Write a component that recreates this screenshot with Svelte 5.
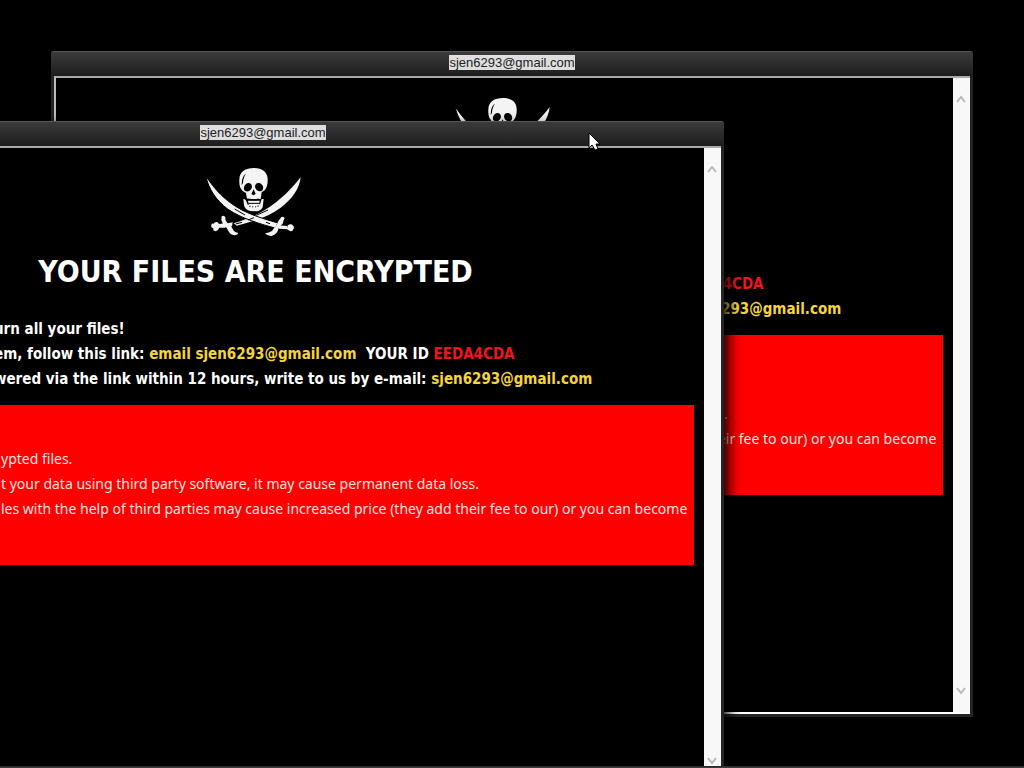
<script>
  const mail = 'sjen6293@gmail.com';
  const frames = ['back', 'front'];
</script>

{#snippet emblem()}
  <svg class="emblem" viewBox="34 36 300 210" role="img" aria-label="Skull and crossed swords">
    <g fill="#f4f4f4">
      <path d="M318 66C315 100 293 132 258 158C222 184 176 200 126 212L117 205C165 190 208 171 241 144C272 120 295 96 318 66Z" />
      <path d="M112 214L92 217L91 206L114 202ZM73 207L91 205L92 218L74 218L69 226Q62 231 56 226L56 220Q48 218 50 210Q50 205 57 206Q61 198 69 202Z" />
      <path d="M81 184Q89 179 92 187Q90 195 98 204Q108 210 114 222Q119 232 131 234Q129 242 116 240Q105 238 100 226Q94 215 84 205Q78 194 81 184Z" />
      <path stroke="#000" stroke-width="3" d="M34 64C41 101 65 137 100 163C142 191 194 206 241 219L250 204C198 189 149 174 111 146C77 122 56 96 34 64Z" />
      <path d="M252 211L277 213L278 223L252 221ZM279 211L286 208Q293 206 295 212Q301 216 296 222Q294 231 286 228L277 223Z" />
      <path d="M260 186Q268 183 270 190Q265 198 265 205Q258 212 252 219Q249 237 231 243Q218 244 211 235Q223 234 232 228Q238 218 246 209Q249 199 260 186Z" />
      <path d="M134 73C135 49 152 39 178 39C205 39 221 53 219 78C219 88 216 98 210 106L201 112L198 132L157 132L154 114Q141 108 137 98Q133 88 134 73Z" />
      <path d="M146 132Q151 130 155 139L159 149L196 148L201 132L207 132L204 156Q200 168 184 169L167 168Q151 165 148 151Z" />
      <path d="M160 137H195L192 155L181 158L164 155Z" />
    </g>
    <path d="M154 56Q145 61 142 76L141 91Q146 86 146 74Q148 63 154 56ZM160 84C169 83 174 91 171 99C168 108 156 113 149 106C145 98 150 87 160 84ZM194 84C184 82 179 91 182 99C186 109 198 112 204 105C208 97 204 87 194 84ZM177 103L170 117L176 121L183 117Z" />
    <path d="M160 129V134M166 131V137M172 132V138M178 132V138M184 132V138M190 130V136M161 145H195M166 152V156M174 154V157M183 154V157M190 151V155" fill="none" stroke="#000" stroke-width="3" />
    <path d="M120 162L151 180M220 165L185 181M178 188L160 195M226 206L214 202M123 207L142 202" fill="none" stroke="#000" stroke-width="3" />
  </svg>
{/snippet}

<main class="desktop">
  {#each frames as place}
    <section class="window {place}">
      <header class="titlebar"><span>{mail}</span></header>
      <div class="viewport">
        <article class="note">
          {@render emblem()}
          <h1>YOUR FILES ARE ENCRYPTED</h1>
          <div class="lines lead">
            <p>urn all your files!</p>
            <p>em, follow this link: <span class="mail">email {mail}</span>&nbsp; YOUR ID <span class="code">EEDA4CDA</span></p>
            <p>wered via the link within 12 hours, write to us by e-mail: <span class="mail">{mail}</span></p>
          </div>
          <div class="lines warning">
            <p>ypted files.</p>
            <p>t your data using third party software, it may cause permanent data loss.</p>
            <p>les with the help of third parties may cause increased price (they add their fee to our) or you can become</p>
          </div>
        </article>
        <div class="scroll">
          <button aria-label="Scroll up"><svg viewBox="0 0 10 8"><path d="M1 7L5 2L9 7" /></svg></button>
          <button aria-label="Scroll down"><svg viewBox="0 0 10 8"><path d="M1 1L5 6L9 1" /></svg></button>
        </div>
      </div>
    </section>
  {/each}
  <div class="taskbar"></div>
  <svg class="pointer" viewBox="0 0 12 19" aria-hidden="true">
    <path d="M1 1V16L4 13L7 18L10 17L8 12H12Z" fill="#fff" stroke="#000" />
  </svg>
</main>

<style>
  :global(body) {
    margin: 0;
    background: #000;
  }
  .desktop {
    position: relative;
    min-height: 100vh;
    overflow: hidden;
    background: #000;
  }
  .window {
    position: absolute;
    box-sizing: border-box;
    display: flex;
    flex-direction: column;
    padding: 0 3px 3px;
    border-top: 1px solid #555;
    border-radius: 3px 3px 0 0;
    background: #242424;
  }
  .back {
    top: 51px;
    right: 51px;
    bottom: 51px;
    left: 51px;
  }
  .front {
    top: 121px;
    right: 300px;
    bottom: -19px;
    left: -198px;
    box-shadow: 4px 6px 14px #000;
  }
  .titlebar {
    display: flex;
    justify-content: center;
    align-items: flex-start;
    height: 24px;
    margin: 0 -3px;
    padding-top: 3px;
    box-sizing: border-box;
    background: linear-gradient(#3b3b3b, #1d1d1d);
    font: 13px/15px "Liberation Sans", sans-serif;
    color: #222;
  }
  .titlebar span {
    background: #dedede;
  }
  .viewport {
    flex: 1;
    display: flex;
    border: solid #fff;
    border-width: 2px 0 2px 2px;
    border-top-color: #aaa;
    border-left-color: #bbb;
    background: #000;
  }
  .note {
    flex: 1;
    min-width: 0;
    padding: 19px 10px 0;
    color: #fff;
    font-family: "DejaVu Sans Condensed", "DejaVu Sans", sans-serif;
  }
  .emblem {
    display: block;
    width: 100px;
    height: 70px;
    margin: 0 auto;
  }
  h1 {
    margin: 17px 0 27px;
    font-size: 30px;
    line-height: 36px;
    text-align: center;
  }
  .lines {
    line-height: 25px;
    white-space: nowrap;
  }
  .lines p {
    margin: 0;
  }
  .lead {
    padding-left: 177px;
    font-size: 15px;
    font-weight: bold;
  }
  .mail {
    color: #f5d43c;
  }
  .code {
    color: #f01420;
  }
  .warning {
    margin-top: 13px;
    padding: 41px 0 44px 184px;
    background: #f00;
    color: #ffe4e0;
    font-family: "Noto Sans", sans-serif;
    font-size: 14px;
  }
  .scroll {
    display: flex;
    flex-direction: column;
    justify-content: space-between;
    width: 17px;
    padding: 12px 0 13px;
    box-sizing: border-box;
    background: #f8f8f8;
  }
  .scroll button {
    display: grid;
    place-items: center;
    width: 15px;
    height: 17px;
    padding: 0;
    border: 0;
    background: none;
  }
  .scroll svg {
    width: 10px;
    height: 8px;
    fill: none;
    stroke: #b8b8b8;
    stroke-width: 2;
  }
  .taskbar {
    position: absolute;
    right: 0;
    bottom: 0;
    left: 0;
    height: 2px;
    background: linear-gradient(#222, #444);
  }
  .pointer {
    position: absolute;
    top: 132px;
    left: 588px;
    width: 12px;
    height: 19px;
  }
</style>
